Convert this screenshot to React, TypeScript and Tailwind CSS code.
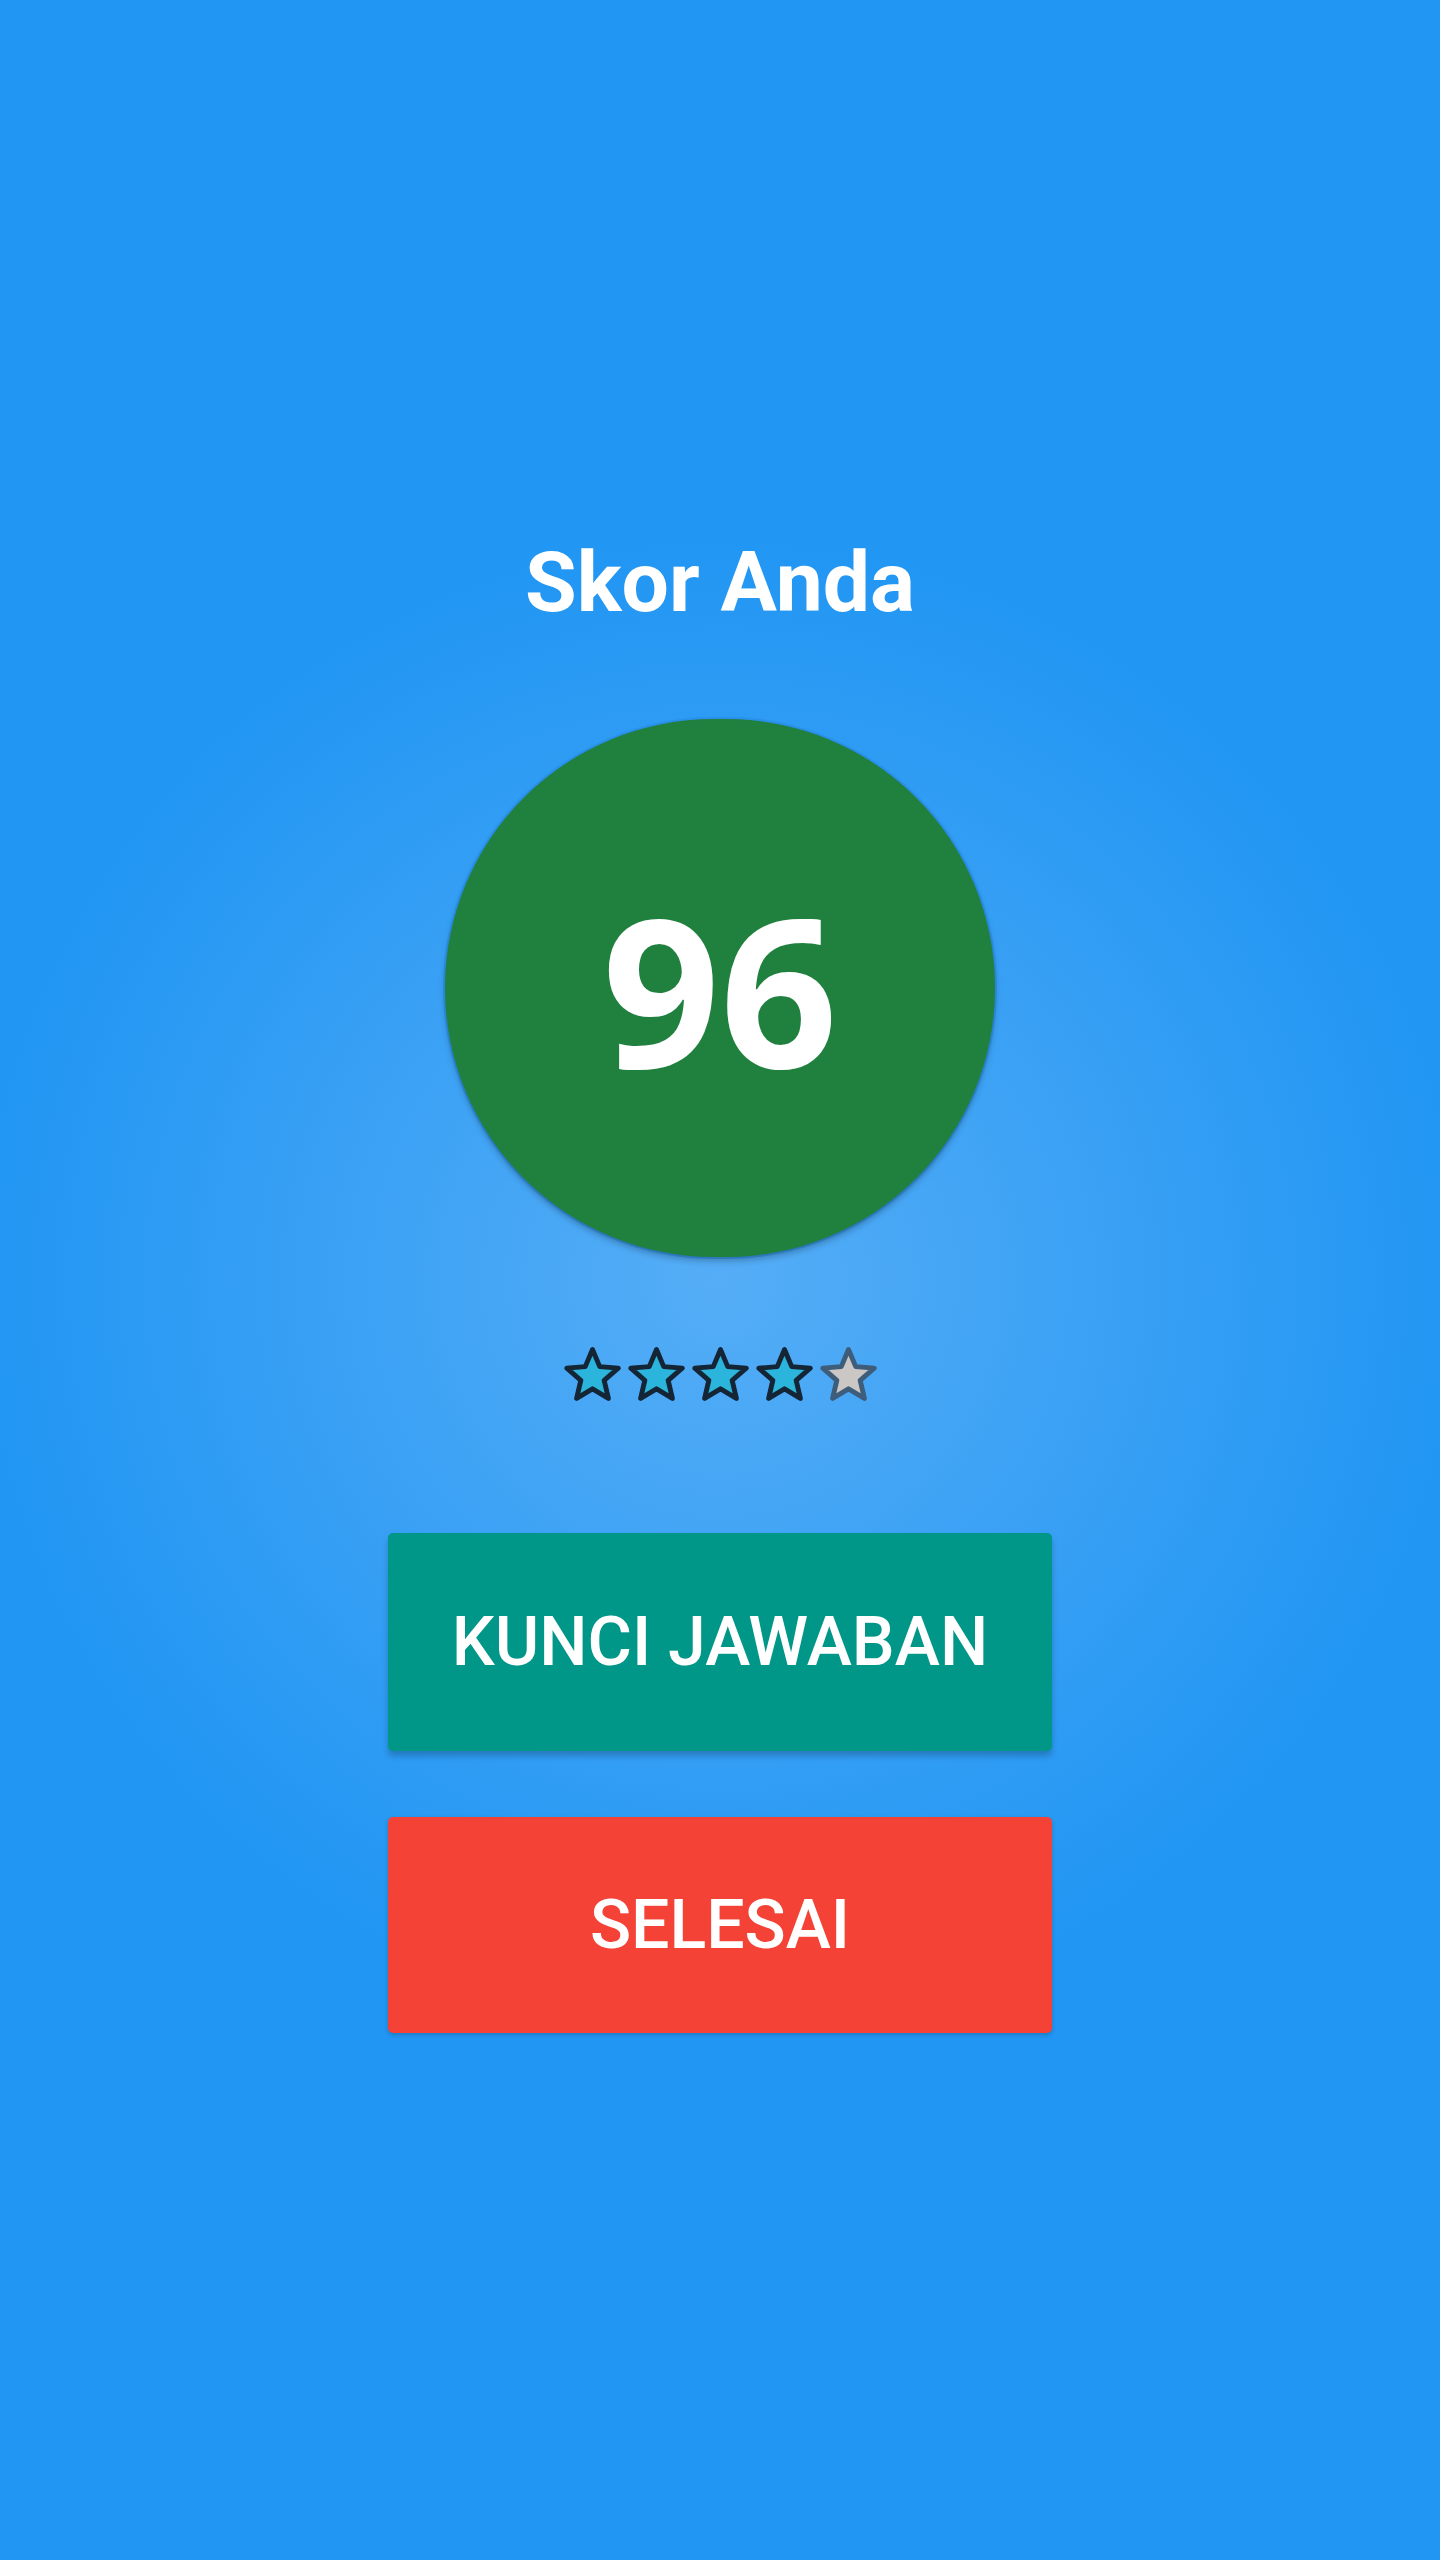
import React from 'react';

const STAR = 'M12 17.27L18.18 21l-1.64-7.03L22 9.24l-7.19-.61L12 2 9.19 8.63 2 9.24l5.46 4.73L5.82 21z';

function Star({ filled }: { filled: boolean }) {
  return (
    <svg
      width="57"
      height="54"
      viewBox="1.1 1.0 21.8 21"
      className="blur-[0.6px]"
    >
      <path
        d={STAR}
        fill={filled ? '#2cb5dc' : '#cbc7c4'}
        stroke={filled ? '#142536' : '#3d5d7a'}
        strokeWidth="1.9"
        strokeLinejoin="round"
      />
    </svg>
  );
}

export default function App() {
  const score = 96;
  const rating = 4;

  return (
    <div className="flex h-[2560px] w-full flex-col items-center bg-[#2196f3] bg-[radial-gradient(circle_at_50%_50%,#55adf6_0%,#2196f3_740px)] pt-[541px] font-['Roboto',sans-serif] text-white">
      {/* Title */}
      <h1 className="text-[84px] font-bold leading-none">Skor Anda</h1>

      {/* Score circle */}
      <div className="mt-[94px] flex h-[538px] w-[550px] items-center justify-center rounded-full bg-[#20813f] shadow-[0_4px_6px_rgba(0,0,0,0.25),0_0_0_2px_rgba(40,140,230,0.6)]">
        <span className="font-['Open_Sans',sans-serif] text-[206px] font-bold leading-none">
          {score}
        </span>
      </div>

      {/* Rating */}
      <div className="mt-[90px] flex gap-[7px]">
        {[0, 1, 2, 3, 4].map((i) => (
          <Star key={i} filled={i < rating} />
        ))}
      </div>

      {/* Buttons */}
      <button
        type="button"
        className="mt-[132px] flex h-[218px] w-[664px] items-center justify-center rounded-[5px] bg-[#009688] text-[68px] font-medium leading-none shadow-[0_5px_6px_rgba(0,0,0,0.22)]"
      >
        KUNCI JAWABAN
      </button>
      <button
        type="button"
        className="mt-[66px] flex h-[216px] w-[664px] items-center justify-center rounded-[5px] bg-[#f44336] text-[68px] font-medium leading-none shadow-[0_2px_4px_rgba(0,0,0,0.18)]"
      >
        SELESAI
      </button>
    </div>
  );
}
